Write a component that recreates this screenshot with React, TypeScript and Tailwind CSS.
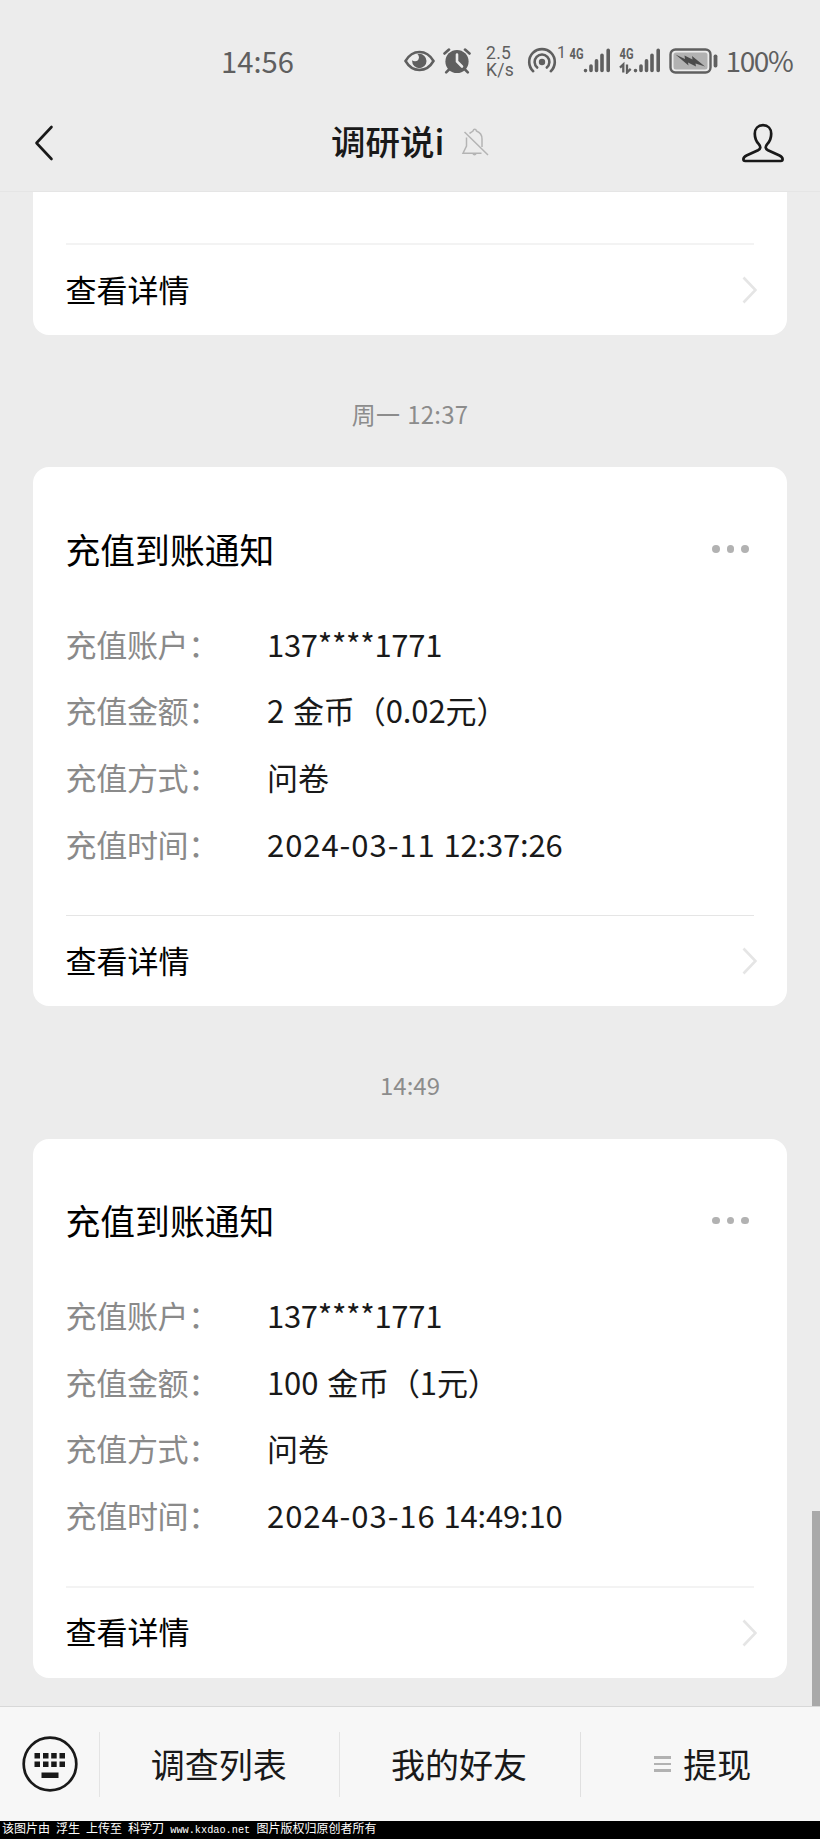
import type { ReactNode } from "react";

const CJK = "font-['Noto_Sans_CJK_SC','Noto_Sans',sans-serif]";

function EyeIcon() {
  return (
    <svg className="block h-[22px] w-[32px]" viewBox="0 0 32 22" fill="none">
      <circle cx="15.300" cy="11" r="7.200" fill="#5f5f5f" />
      <circle cx="11" cy="7.300" r="3.900" fill="#ececec" />
      <path d="M1.500 11C5 5 10 2 15.500 2S26 5 29.500 11C26 17 21 20 15.500 20S5 17 1.500 11Z" stroke="#5f5f5f" strokeWidth="2.500" />
    </svg>
  );
}

function AlarmIcon() {
  return (
    <svg className="block h-[26px] w-[28px]" viewBox="0 0 28 26" fill="none">
      <circle cx="14" cy="13.500" r="11.600" fill="#5f5f5f" />
      <path d="M1.500 5.500 6 1.600M26.500 5.500 22 1.600M6 21.500l-2.800 2.800M22 21.500l2.800 2.800" stroke="#5f5f5f" strokeWidth="2.600" strokeLinecap="round" />
      <path d="M14 6.500v7l5 5" stroke="#ececec" strokeWidth="2.600" strokeLinecap="round" />
    </svg>
  );
}

function HotspotIcon() {
  return (
    <svg className="block h-[28px] w-[30px]" viewBox="0 0 30 28" fill="none" stroke="#5f5f5f" strokeWidth="2.600" strokeLinecap="round">
      <circle cx="15" cy="16" r="3.200" fill="#5f5f5f" stroke="none" />
      <path d="M10.200 21.500a7.400 7.400 0 1 1 9.600 0" />
      <path d="M6.200 25.200a12.800 12.800 0 1 1 17.600 0" />
    </svg>
  );
}

function SignalIcon({ arrows = false }: { arrows?: boolean }) {
  return (
    <svg className="block h-[28px] w-[42px]" viewBox="0 0 42 28" fill="#5f5f5f">
      <text x="0.500" y="12.500" fontSize="15" fontWeight="700" fontFamily="Roboto, sans-serif" textLength="14" lengthAdjust="spacingAndGlyphs">
        4G
      </text>
      {arrows && (
        <path d="M4.300 26.500V18.500L1 21.700M8 18.500v8l3.700-3.600" fill="none" stroke="#5f5f5f" strokeWidth="2.300" />
      )}
      <g stroke="#5f5f5f" strokeWidth="3.600" strokeLinecap="round">
        <path d="M16.500 24.500v.1M22 20v4.500M27.500 14.700v9.800M33 9.300v15.200M39.200 4.200v20.300" />
      </g>
    </svg>
  );
}

function BatteryIcon() {
  return (
    <svg className="block h-[26px] w-[49px]" viewBox="0 0 49 26" fill="none">
      <rect x="1.500" y="1.500" width="40" height="23" rx="5" stroke="#5f5f5f" strokeWidth="2.400" />
      <rect x="4.500" y="4.500" width="34" height="17" rx="2.500" fill="#b2b2b2" />
      <path d="M6.500 6.500 16 11l-.5-3.500 8 4-.5-3.500L36 18.500l-9.500-3 .5 3-8-4 .5 3Z" fill="#4b4b4b" />
      <rect x="44.600" y="6.500" width="3.800" height="13" rx="1.700" fill="#5f5f5f" />
    </svg>
  );
}

function StatusBar() {
  return (
    <div className="flex h-[100px] items-start pt-[45px] text-[#5f5f5f]">
      <div className="-mt-[0.500px] ml-[221px] h-[30px] w-[183px] text-[29.200px] leading-[30px]">14:56</div>
      <div className="mt-[4.500px]"><EyeIcon /></div>
      <div className="mt-[2.500px] ml-[7px]"><AlarmIcon /></div>
      <div className="ml-[15px] w-[30px] font-[Roboto,sans-serif] text-[17.500px] leading-[16.500px] tracking-[0.300px] whitespace-nowrap">
        <div>2.5</div>
        <div>K/s</div>
      </div>
      <div className="mt-[1px] ml-[11px]"><HotspotIcon /></div>
      <div className="mt-[1px] w-[12px] font-[Roboto,sans-serif] text-[16px] leading-[14px]">1</div>
      <div className="mt-[1px]"><SignalIcon /></div>
      <div className="mt-[1px] ml-[7.500px]"><SignalIcon arrows /></div>
      <div className="mt-[3px] ml-[8px]"><BatteryIcon /></div>
      <div className="-mt-[0.500px] ml-[8px] h-[30px] text-[28px] leading-[30px] tracking-[-1.400px]">100%</div>
    </div>
  );
}

function NavBar() {
  return (
    <div className="flex h-[92px] items-start border-b border-[#e5e5e5]">
      <svg className="mt-[25px] ml-[34px] h-[36px] w-[20px]" viewBox="0 0 20 36" fill="none">
        <path d="M17.500 2 2.500 18l15 16" stroke="#191919" strokeWidth="2.600" strokeLinecap="round" strokeLinejoin="round" />
      </svg>
      <h1 className="mt-[15px] ml-[277px] w-[130px] text-[34.500px] leading-[50px] font-medium whitespace-nowrap text-[#191919]">调研说i</h1>
      <svg className="mt-[28px] h-[28px] w-[28px]" viewBox="0 0 28 28" fill="none" stroke="#b4b4b4" strokeWidth="1.500">
        <path d="M5.500 9.500V18L2 25.300h18.500M8.500 5.500C9.500 4.300 11 4 12 3c.6-2.300 2.900-2.300 3.500 0 4 1.500 5.500 4 5.500 8v8M3.500 4l23.500 23M12 25.500c.5 1.700 2.500 1.700 3 0" />
      </svg>
      <svg className="mt-[23px] ml-[253px] h-[40px] w-[42px]" viewBox="0 0 42 40" fill="none">
        <path d="M21 2.200c-5 0-8.200 3.500-8.200 8.500 0 4.500 1.300 7.600 4 10.500 2.300 2.700 1.800 4.600-.8 6L4.500 32.500C2 33.700 1.400 35 1.400 36.300c0 1.200.7 1.700 1.800 1.700h35.600c1.100 0 1.800-.5 1.800-1.700 0-1.300-.6-2.600-3.100-3.800L26 27.200c-2.600-1.400-3.100-3.300-.8-6 2.700-2.900 4-6 4-10.500 0-5-3.200-8.500-8.200-8.500Z" stroke="#191919" strokeWidth="2.700" />
      </svg>
    </div>
  );
}

function DetailLink() {
  return (
    <div className="-ml-[0.500px] flex h-[90px] items-center justify-between text-[31px] leading-[46px] text-black">
      <span className="pb-[3px]">查看详情</span>
      <svg className="-mr-[3px] h-[28px] w-[15px]" viewBox="0 0 15 28" fill="none">
        <path d="M1.500 1.500 13.500 14l-12 12.500" stroke="#e5e5e5" strokeWidth="2.600" />
      </svg>
    </div>
  );
}

function NoticeCard({ rows, divider }: { rows: [string, ReactNode][]; divider: ReactNode }) {
  return (
    <section className="mx-[33px] h-[539px] rounded-[16px] bg-white px-[33px] pt-[57px]">
      <div className="flex h-[50px] items-center justify-between">
        <h2 className="-ml-[0.500px] pb-[1px] text-[34.800px] leading-[50px] text-black">充值到账通知</h2>
        <div className="mr-[5px] flex gap-[7px]">
          <span className="size-[7.600px] rounded-full bg-[#b2b2b2]" />
          <span className="size-[7.600px] rounded-full bg-[#b2b2b2]" />
          <span className="size-[7.600px] rounded-full bg-[#b2b2b2]" />
        </div>
      </div>
      <dl className="mt-[36.500px] h-[304.500px] text-[31px] leading-[66.700px]">
        {rows.map(([label, value]) => (
          <div key={label} className="flex whitespace-nowrap">
            <dt className="-ml-[0.500px] w-[201.500px] tracking-[-0.300px] text-[#8a8a8a]">{label}：</dt>
            <dd className="text-[#191919]">{value}</dd>
          </div>
        ))}
      </dl>
      {divider}
      <DetailLink />
    </section>
  );
}

function MenuItem({ children }: { children: ReactNode }) {
  return (
    <div className="flex flex-1 items-center justify-center pr-[2px] text-[34px] leading-[50px]">{children}</div>
  );
}

const account = <span className="tracking-[-0.300px]">137****1771</span>;

function Amount({ children }: { children: string }) {
  return <span className="tracking-[-0.100px] [word-spacing:2px]">{children}</span>;
}

function DateTime({ date, time }: { date: string; time: string }) {
  return (
    <span className="tracking-[0.950px]">
      {date} <span className="tracking-[-0.200px]">{time}</span>
    </span>
  );
}

export default function App() {
  return (
    <div className={`relative flex h-[1839px] w-[820px] flex-col overflow-hidden bg-[#ececec] ${CJK}`}>
      <StatusBar />
      <NavBar />
      <main className="h-[1514px]">
        <section className="mx-[33px] h-[143px] rounded-b-[16px] bg-white px-[33px] pt-[51px]">
          <div className="h-[2px] bg-[#f3f3f3]" />
          <DetailLink />
        </section>
        <div className="h-[132px] pt-[61px] text-center text-[24px] leading-[36px] tracking-[0.200px] text-[#8c8c8c] [word-spacing:1.500px]">
          周一 12:37
        </div>
        <NoticeCard
          rows={[
            ["充值账户", account],
            ["充值金额", <Amount>2 金币（0.02元）</Amount>],
            ["充值方式", "问卷"],
            ["充值时间", <DateTime date="2024-03-11" time="12:37:26" />],
          ]}
          divider={<div className="h-px bg-[#e5e5e5]" />}
        />
        <div className="h-[132.500px] pt-[61px] text-center text-[24px] leading-[36px] text-[#8c8c8c]">14:49</div>
        <NoticeCard
          rows={[
            ["充值账户", account],
            ["充值金额", <Amount>100 金币（1元）</Amount>],
            ["充值方式", "问卷"],
            ["充值时间", <DateTime date="2024-03-16" time="14:49:10" />],
          ]}
          divider={<div className="-mt-px h-[2px] bg-[#f3f3f3]" />}
        />
      </main>
      <footer className="flex h-[115px] items-center border-t border-[#d8d8d8] bg-[#f7f7f7] text-[#191919]">
        <div className="flex w-[99px] justify-center">
          <svg className="h-[56px] w-[56px]" viewBox="0 0 56 56">
            <circle cx="28" cy="28" r="26.300" fill="none" stroke="#191919" strokeWidth="2.700" />
            <path d="M12.500 17h5.500v5.500h-5.500zM21 17h5.500v5.500H21zM29.200 17h5.500v5.500h-5.500zM37.500 17H43v5.500h-5.500zM12.500 25.500h5.500V31h-5.500zM21 25.500h5.500V31H21zM29.200 25.500h5.500V31h-5.500zM37.500 25.500H43V31h-5.500zM19.500 36.500h17V42h-17z" fill="#191919" />
          </svg>
        </div>
        <div className="h-[65px] w-px bg-[#e4e4e4]" />
        <MenuItem>调查列表</MenuItem>
        <div className="h-[65px] w-px bg-[#e4e4e4]" />
        <MenuItem>我的好友</MenuItem>
        <div className="h-[65px] w-px bg-[#e0e0e0]" />
        <MenuItem>
          <span className="mr-[12px] ml-[7px] flex w-[17px] flex-col gap-[4px]">
            <span className="h-[2.500px] bg-[#b2b2b2]" />
            <span className="h-[2.500px] bg-[#b2b2b2]" />
            <span className="h-[2.500px] bg-[#b2b2b2]" />
          </span>
          提现
        </MenuItem>
      </footer>
      <div className="h-[18px] bg-black pl-[2px] font-['Liberation_Mono','Noto_Sans_CJK_SC',monospace] text-[12px] leading-[18px] tracking-normal whitespace-pre text-white">
        该图片由<span className="text-[10px]"> </span>浮生<span className="text-[10px]"> </span>上传至<span className="text-[10px]"> </span>科学刀<span className="text-[10.250px]"> www.kxdao.net </span>图片版权归原创者所有
      </div>
      <div className="absolute top-[1511px] right-0 h-[195px] w-[8px] bg-[#a9a9a9]" />
    </div>
  );
}
